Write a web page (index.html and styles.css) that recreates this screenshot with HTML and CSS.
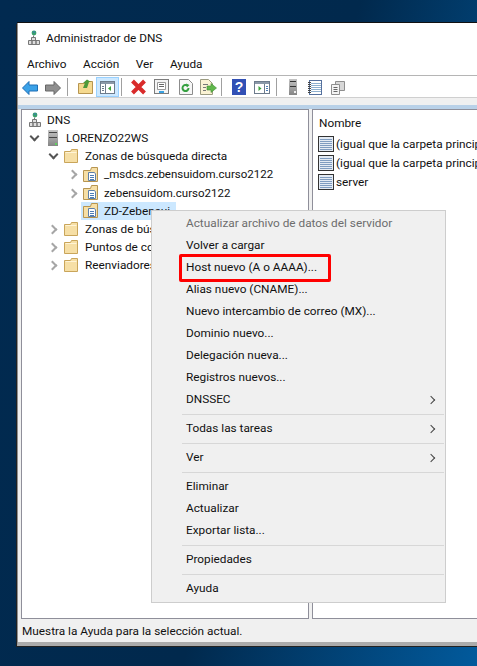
FILE: index.html
```html
<!DOCTYPE html>
<html lang="es">
<head>
<meta charset="utf-8">
<title>Administrador de DNS</title>
<link rel="stylesheet" href="styles.css">
</head>
<body>
<svg class="defs" width="0" height="0">
  <defs>
    <linearGradient id="steel" x1="0" y1="0" x2="0" y2="1">
      <stop offset="0" stop-color="#c4c4c4"/><stop offset="1" stop-color="#858585"/>
    </linearGradient>
    <symbol id="folder" viewBox="0 0 14 14">
      <path d="M.5 2.500V13.500H13.500V.5H7.500L6.500 2.500Z" fill="#f6dfa6" stroke="#c9a55a"/>
      <path d="M1.500 3.500H12.500" stroke="#fff4d6"/>
    </symbol>
    <symbol id="zone" viewBox="0 0 15 15">
      <path d="M.5 3.500V14.500H14.500V.5H8.500L7.500 3.500Z" fill="#f6dfa6" stroke="#b79550"/>
      <path d="M5.500 5.500H11.500L12.500 7V13.500H5.500Z" fill="#fff" stroke="#5d7fa8"/>
      <path d="M7 8.500H11M7 10.500H11M7 12.500H11" stroke="#4d7db5"/>
    </symbol>
    <symbol id="dns" viewBox="0 0 12 16">
      <circle cx="6" cy="3" r="2.400" fill="#3aa06c"/>
      <path d="M4.500 2.500 6 1l1.500 1.500" fill="#3b78c4"/>
      <path d="M5.500 5.500V8" stroke="#777"/>
      <path d="M3.500 7.500H7.500V10.500H3.500ZM.5 10.500H4V14.500H.5ZM4 10.500H8V14.500H4ZM8 10.500H11.500V14.500H8Z" fill="#dedede" stroke="#777"/>
    </symbol>
    <symbol id="rec" viewBox="0 0 16 16">
      <rect x=".5" y=".5" width="15" height="15" fill="#e4ebf4" stroke="#333"/>
      <path d="M2 3.500H14M2 5.500H14M2 7.500H14M2 9.500H14M2 11.500H14M2 13.500H14" stroke="#7f9cc0"/>
    </symbol>
  </defs>
</svg>
<main class="window">
  <header class="title">
    <svg class="title-icon" width="12" height="16"><use href="#dns"/></svg>
    <span>Administrador de DNS</span>
  </header>
  <nav class="menubar">
    <span>Archivo</span><span>Acción</span><span>Ver</span><span>Ayuda</span>
  </nav>
  <div class="toolbar">
    <svg class="tool t-back" width="16" height="14" viewBox="0 0 16 14"><path d="M.5 7 7 .5V4H15.500V10H7V13.500Z" fill="#3ba2e8" stroke="#1f6fb5"/></svg>
    <svg class="tool t-fwd" width="16" height="14" viewBox="0 0 16 14"><path d="M15.500 7 9 .5V4H.5V10H9V13.500Z" fill="#8f8f8f" stroke="#666"/></svg>
    <i class="tsep s1"></i>
    <svg class="tool t-up" width="15" height="15" viewBox="0 0 15 15"><path d="M.5 4.500V14.500H14.500V2.500H8L7 4.500Z" fill="#f5d98f" stroke="#b79550"/><path d="M5 9 7 4H5L9 .5 13 3H11L9 9Z" fill="#4e9a3a"/></svg>
    <span class="toggle"><svg width="15" height="13" viewBox="0 0 15 13"><rect x=".5" y=".5" width="14" height="12" fill="#fff" stroke="#6d7b8c"/><path d="M1 1H14V3H1Z" fill="#8a98a8"/><path d="M5.500 3V12" stroke="#6d7b8c"/><path d="M2 5.500H4M2 7.500H4M2 9.500H4" stroke="#6d7b8c"/><path d="M11 5V10L8 7.500Z" fill="#3aa53a"/></svg></span>
    <i class="tsep s2"></i>
    <svg class="tool t-x" width="17" height="16" viewBox="0 0 17 16"><path d="M2.500 2 14.500 14M14.500 2 2.500 14" stroke="#d92b2b" stroke-width="4"/></svg>
    <svg class="tool t-prop" width="15" height="15" viewBox="0 0 15 15"><rect x=".5" y=".5" width="14" height="14" fill="#f4f4f4" stroke="#7c7c7c"/><path d="M3.500 3.500H11.500V10.500H3.500Z" fill="#fff" stroke="#9a9a9a"/><path d="M5 5.500H10M5 7.500H10" stroke="#666"/><path d="M5 13H10" stroke="#39a0e0" stroke-width="2"/></svg>
    <svg class="tool t-ref" width="14" height="16" viewBox="0 0 14 16"><path d="M.5.5H9.500L13.500 4.500V15.500H.5Z" fill="#f7f7f7" stroke="#8c8c8c"/><path d="M9.500 9a3 3 0 1 1-1-2.200" fill="none" stroke="#35a040" stroke-width="2"/><path d="M7 4.500 10.500 6 8 8.500Z" fill="#35a040"/></svg>
    <svg class="tool t-exp" width="17" height="16" viewBox="0 0 17 16"><path d="M.5.5H8.500L12.500 4.500V15.500H.5Z" fill="#fbf3d4" stroke="#9b9b80"/><path d="M3 5.500H8M3 8.500H6M3 11.500H6" stroke="#777"/><path d="M7 7H11V4.500L16.500 9 11 13.500V11H7Z" fill="#61b84c" stroke="#3f8e33" stroke-width=".6"/></svg>
    <i class="tsep s3"></i>
    <svg class="tool t-help" width="14" height="16" viewBox="0 0 14 16"><rect width="14" height="16" fill="#3150b5"/><text x="7" y="13" class="help-q">?</text></svg>
    <svg class="tool t-pane" width="16" height="13" viewBox="0 0 16 13"><rect x=".5" y=".5" width="15" height="12" fill="#fff" stroke="#6d7b8c"/><path d="M1 1H15V3H1Z" fill="#8a98a8"/><path d="M10.500 3V12" stroke="#6d7b8c"/><path d="M12 5.500H14M12 7.500H14M12 9.500H14" stroke="#4d7db5"/><path d="M4.500 5V10L7.500 7.500Z" fill="#3aa53a"/></svg>
    <i class="tsep s4"></i>
    <svg class="tool t-srv" width="8" height="16" viewBox="0 0 8 16"><rect width="8" height="16" fill="url(#steel)"/><path d="M1 2.500H7M1 7.500H7" stroke="#333"/><rect x="5" y="12" width="2" height="2" fill="#eee"/></svg>
    <svg class="tool t-note" width="14" height="15" viewBox="0 0 14 15"><rect x="1.500" y=".5" width="12" height="14" fill="#fff" stroke="#55709d"/><path d="M3 3.500H13M3 5.500H13M3 7.500H13M3 9.500H13M3 11.500H13" stroke="#8fb0cf"/><path d="M0 2.500H3M0 4.500H3M0 6.500H3M0 8.500H3M0 10.500H3M0 12.500H3" stroke="#444"/></svg>
    <svg class="tool t-copy" width="14" height="15" viewBox="0 0 14 15"><path d="M4.500 1.500H13.500V10.500H4.500Z" fill="#d8d8d8" stroke="#8f8f8f"/><path d="M.5 4.500H8.500V14.500H.5Z" fill="#f4f4f4" stroke="#8f8f8f"/><path d="M2.500 7.500H6.500M2.500 9.500H6.500M2.500 11.500H6.500" stroke="#666"/></svg>
  </div>
  <div class="band"></div>
  <div class="panes">
    <section class="tree">
      <div class="row l0"><svg class="ic" width="12" height="16"><use href="#dns"/></svg><span>DNS</span></div>
      <div class="row l0b"><i class="arrow down"></i><svg class="ic" width="10" height="16" viewBox="0 0 10 16"><rect width="10" height="16" fill="url(#steel)"/><path d="M1 2.500H9M1 7.500H9" stroke="#444"/><rect x="7" y="13" width="2" height="2" fill="#5fd05f"/></svg><span>LORENZO22WS</span></div>
      <div class="row l1"><i class="arrow down"></i><svg class="ic" width="14" height="14"><use href="#folder"/></svg><span>Zonas de búsqueda directa</span></div>
      <div class="row l2"><i class="arrow"></i><svg class="ic" width="15" height="15"><use href="#zone"/></svg><span class="fqdn">_msdcs.zebensuidom.curso2122</span></div>
      <div class="row l2"><i class="arrow"></i><svg class="ic" width="15" height="15"><use href="#zone"/></svg><span class="fqdn">zebensuidom.curso2122</span></div>
      <div class="row l2"><i class="arrow blank"></i><div class="sel"><svg class="ic" width="15" height="15"><use href="#zone"/></svg><span>ZD-Zebensui</span></div></div>
      <div class="row l1"><i class="arrow"></i><svg class="ic" width="14" height="14"><use href="#folder"/></svg><span>Zonas de búsqueda inversa</span></div>
      <div class="row l1"><i class="arrow"></i><svg class="ic" width="14" height="14"><use href="#folder"/></svg><span>Puntos de confianza</span></div>
      <div class="row l1"><i class="arrow"></i><svg class="ic" width="14" height="14"><use href="#folder"/></svg><span>Reenviadores condicionales</span></div>
    </section>
    <section class="list">
      <div class="list-head">Nombre</div>
      <div class="item"><svg width="16" height="16"><use href="#rec"/></svg><span>(igual que la carpeta principal)</span></div>
      <div class="item"><svg width="16" height="16"><use href="#rec"/></svg><span>(igual que la carpeta principal)</span></div>
      <div class="item"><svg width="16" height="16"><use href="#rec"/></svg><span>server</span></div>
    </section>
  </div>
  <footer class="status">Muestra la Ayuda para la selección actual.</footer>
</main>
<ul class="context">
  <li class="off">Actualizar archivo de datos del servidor</li>
  <li>Volver a cargar</li>
  <li class="hot">Host nuevo (A o AAAA)...</li>
  <li>Alias nuevo (CNAME)...</li>
  <li>Nuevo intercambio de correo (MX)...</li>
  <li>Dominio nuevo...</li>
  <li>Delegación nueva...</li>
  <li>Registros nuevos...</li>
  <li class="sub">DNSSEC</li>
  <li class="sep"></li>
  <li class="sub">Todas las tareas</li>
  <li class="sep"></li>
  <li class="sub">Ver</li>
  <li class="sep"></li>
  <li>Eliminar</li>
  <li>Actualizar</li>
  <li>Exportar lista...</li>
  <li class="sep"></li>
  <li>Propiedades</li>
  <li class="sep"></li>
  <li>Ayuda</li>
</ul>
</body>
</html>
```
FILE: styles.css
```css
*, *::before, *::after { box-sizing: border-box; }
html, body { margin: 0; height: 100%; }
body {
  position: relative;
  overflow: hidden;
  font: 11.8px/16px Roboto, "Open Sans", sans-serif;
  color: #111;
  background: linear-gradient(105deg, #012a50 0%, #01294d 55%, #025a9c 100%);
  background-color: #01294d;
  padding: 23px 0 0 17px;
}
.defs { position: absolute; }
.window {
  height: 623px;
  width: 470px;
  background: #f0f0f0;
  border-left: 1px solid #8f8f8f;
  border-bottom: 4px solid #ababab;
  display: flex;
  flex-direction: column;
  box-shadow: -1px 1px 0 #222, 0 -1px 0 #111;
}
.title { height: 29px; background: #fff; display: flex; align-items: center; gap: 6px; padding-left: 10px; }
.menubar { height: 24px; background: #fff; display: flex; align-items: center; border-bottom: 1px solid #b5b5b5; padding-left: 9px; gap: 16.6px; }
.toolbar { height: 22px; position: relative; background: #fff; border-bottom: 1px solid #cfcfcf; }
.tool { position: absolute; top: 3px; }
.t-back { left: 4px; top: 5px; }
.t-fwd { left: 27px; top: 5px; }
.t-up { left: 60px; top: 3px; }
.toggle { position: absolute; left: 78px; top: 1px; width: 23px; height: 20px; background: #cce8ff; border: 1px solid #99d1ff; display: flex; align-items: center; justify-content: center; }
.t-x { left: 112px; top: 3px; }
.t-prop { left: 136px; top: 3px; }
.t-ref { left: 161px; top: 3px; }
.t-exp { left: 182px; top: 3px; }
.t-help { left: 214px; top: 3px; }
.t-pane { left: 236px; top: 5px; }
.t-srv { left: 271px; top: 3px; }
.t-note { left: 290px; top: 4px; }
.t-copy { left: 313px; top: 4px; }
.help-q { font: bold 14px "Liberation Sans", sans-serif; fill: #fff; text-anchor: middle; }
.tsep { position: absolute; top: 2px; width: 1px; height: 18px; background: #a0a0a0; }
.s1 { left: 49px; }
.s2 { left: 103px; }
.s3 { left: 203px; }
.s4 { left: 258px; }
.band { height: 11px; background: linear-gradient(#f0f0f0 0 7px, #b9d1e8 7px); flex: none; }
.panes { flex: 1; display: flex; min-height: 0; padding: 0 0 0 3px; gap: 3px; }
.tree { width: 288px; background: #fff; border: 1px solid #8f8f9a; padding-top: 1px; }
.list { flex: 1; background: #fff; border: 1px solid #8f8f9a; border-right: 0; padding: 5px 0 0 5px; overflow: hidden; white-space: nowrap; }
.row { height: 18.125px; display: flex; align-items: center; white-space: nowrap; }
.ic { flex: none; }
.row span { margin-left: 6px; }
.row .fqdn { font-size: 11.5px; }
.arrow { width: 8px; height: 8px; flex: none; margin-right: 10px; position: relative; }
.arrow::before { content: ""; position: absolute; left: 0; top: 1px; width: 7px; height: 7px; border-top: 2px solid #a6a6a6; border-right: 2px solid #a6a6a6; transform: rotate(45deg); }
.arrow.down::before { border-color: #555; transform: rotate(135deg); left: 1px; top: -1px; }
.arrow.blank::before { display: none; }
.l0 { padding-left: 7px; }
.l0b { padding-left: 8px; }
.l0b span { margin-left: 8px; }
.l1 { padding-left: 27px; }
.l1 .arrow { margin-right: 7px; }
.l1 span { margin-left: 7px; }
.l2 { padding-left: 47px; }
.l2 .arrow { margin-right: 6px; }
.sel { display: flex; align-items: center; background: #cce8ff; height: 18px; padding: 0 3px 0 2px; margin-left: -2px; width: 95px; }
.list-head { height: 19.5px; padding-left: 1px; }
.item { height: 19px; display: flex; align-items: center; gap: 2px; }
.item svg { flex: none; }
.status { height: 23px; flex: none; display: flex; align-items: center; padding-left: 4px; background: #f0f0f0; }
.context {
  position: absolute;
  left: 151px;
  top: 210px;
  width: 295px;
  margin: 0;
  padding: 2px;
  list-style: none;
  background: #f0f0f0;
  border: 1px solid #cdcdcd;
}
.context li { height: 22px; line-height: 21px; padding-left: 32px; position: relative; }
.context .off { color: #6d6d6d; }
.context .hot::before { content: ""; position: absolute; left: 25px; top: -3px; width: 152px; height: 28px; border: 3px solid #f00; border-radius: 2px; }
.context .sub::after { content: ""; position: absolute; right: 9px; top: 8px; width: 6px; height: 6px; border-top: 1.5px solid #444; border-right: 1.5px solid #444; transform: rotate(45deg); }
.context .sep { height: 7px; padding: 0; margin-left: 28px; }
.context .sep::before { content: ""; position: absolute; left: 0; right: -1px; top: 3px; height: 1px; background: #d7d7d7; }
```
